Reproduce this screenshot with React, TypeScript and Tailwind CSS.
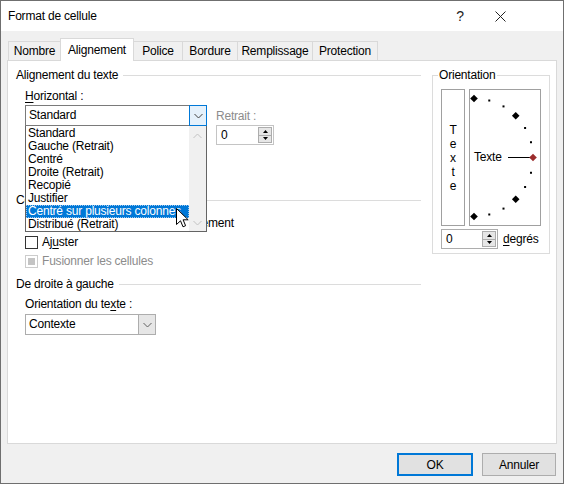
import React from "react";

function Chevron({ color = "#606060", up = false }: { color?: string; up?: boolean }) {
  return (
    <svg width="9" height="6" viewBox="0 0 9 6">
      <path
        d={up ? "M0.5 5 L4.5 1 L8.5 5" : "M0.5 1 L4.5 5 L8.5 1"}
        fill="none"
        stroke={color}
        strokeWidth="1"
      />
    </svg>
  );
}

function GroupHeader({ label }: { label: string }) {
  return (
    <div className="flex items-center h-[14px] leading-[14px]">
      <span>{label}</span>
      <div className="flex-1 h-px bg-[#dcdcdc] ml-[5px]" />
    </div>
  );
}

function Spin({ w, light = false }: { w: string; light?: boolean }) {
  return (
    <div className={`flex ${w} h-[20px] border ${light ? "border-[#c4c4c4]" : "border-[#adadad]"} bg-white`}>
      <div className="flex-1 pl-[4px] leading-[18px]">0</div>
      <div className="flex flex-col w-[15px] py-[1px] pr-[1px]">
        <div className="flex-1 flex items-center justify-center bg-[#e6e6e6] border border-[#adadad]">
          <svg width="5" height="3" viewBox="0 0 5 3">
            <path d="M2.5 0 L5 3 L0 3 Z" fill="#000" />
          </svg>
        </div>
        <div className="flex-1 flex items-center justify-center bg-[#e6e6e6] border border-[#adadad] border-t-0">
          <svg width="5" height="3" viewBox="0 0 5 3">
            <path d="M0 0 L5 0 L2.5 3 Z" fill="#000" />
          </svg>
        </div>
      </div>
    </div>
  );
}

const items = [
  "Standard",
  "Gauche (Retrait)",
  "Centré",
  "Droite (Retrait)",
  "Recopié",
  "Justifier",
  "Centré sur plusieurs colonnes",
  "Distribué (Retrait)",
];

function OrientationDial() {
  const cx = 4;
  const cy = 67.5;
  const r = 59;
  const marks = [];
  for (let i = 0; i <= 12; i++) {
    const a = (i * 15 * Math.PI) / 180;
    const x = cx + r * Math.sin(a);
    const y = cy - r * Math.cos(a);
    marks.push({ x, y, big: i % 3 === 0, red: i === 6 });
  }
  return (
    <div className="relative w-[72px] h-[137px] border border-[#a0a0a0] bg-white">
      <svg className="absolute left-0 top-0" width="70" height="135" viewBox="0 0 70 135">
        <line x1="38" y1="67.5" x2="61" y2="67.5" stroke="#000" strokeWidth="1" />
        {marks.map((m, i) =>
          m.big ? (
            <path
              key={i}
              d={`M${m.x} ${m.y - 3.8} L${m.x + 3.8} ${m.y} L${m.x} ${m.y + 3.8} L${m.x - 3.8} ${m.y} Z`}
              fill={m.red ? "#9b2c2c" : "#000"}
            />
          ) : (
            <rect key={i} x={m.x - 1} y={m.y - 1} width="2" height="2" fill="#000" />
          )
        )}
      </svg>
      <span className="absolute left-[4px] top-[60px] leading-[14px]">Texte</span>
    </div>
  );
}

export default function App() {
  return (
    <div className="relative w-[564px] h-[484px] border border-[#6f6f6f] bg-[#f0f0f0] flex flex-col text-[12px] text-black font-['Liberation_Sans',Arial,sans-serif] tracking-[-0.2px] overflow-hidden">
      {/* Title bar */}
      <div className="h-[30px] bg-white flex items-center shrink-0">
        <div className="pl-[7px] flex-1 leading-[14px]">Format de cellule</div>
        <div className="w-[12px] text-center text-[14px] leading-[16px] text-[#222]">?</div>
        <svg className="ml-[29px] mr-[57px]" width="11" height="11" viewBox="0 0 11 11">
          <path d="M0.5 0.5 L10.5 10.5 M10.5 0.5 L0.5 10.5" stroke="#222" strokeWidth="1" />
        </svg>
      </div>

      {/* Tabs */}
      <div className="relative z-10 flex items-end h-[30px] pl-[7px] shrink-0">
        <div className="w-[52px] h-[20px] flex items-center justify-center bg-[#f0f0f0] border-l border-t border-b border-[#d9d9d9]">Nombre</div>
        <div className="w-[74px] h-[23px] flex items-center justify-center bg-white border-l border-t border-r border-[#d9d9d9]">Alignement</div>
        <div className="w-[48px] h-[20px] flex items-center justify-center bg-[#f0f0f0] border-t border-b border-[#d9d9d9]">Police</div>
        <div className="w-[55px] h-[20px] flex items-center justify-center bg-[#f0f0f0] border-l border-t border-b border-[#d9d9d9]">Bordure</div>
        <div className="w-[75px] h-[20px] flex items-center justify-center bg-[#f0f0f0] border-l border-t border-b border-[#d9d9d9]">Remplissage</div>
        <div className="w-[66px] h-[20px] flex items-center justify-center bg-[#f0f0f0] border border-[#d9d9d9]">Protection</div>
      </div>

      {/* Panel */}
      <div className="-mt-px mx-[6px] h-[384px] border border-[#d9d9d9] bg-white flex items-start pl-[8px] pt-[7px] shrink-0">
        {/* Left column */}
        <div className="w-[405px] flex flex-col">
          <GroupHeader label="Alignement du texte" />
          <div className="flex pl-[9px] mt-[7px]">
            <div className="flex flex-col w-[182px]">
              <div className="h-[14px] leading-[14px]">
                <span className="underline underline-offset-2">H</span>orizontal :
              </div>
              <div className="relative mt-[2px]">
                <div className="flex h-[21px] border border-[#7a7a7a] bg-white">
                  <div className="flex-1 pl-[3px] leading-[19px]">Standard</div>
                  <div className="w-[18px] -my-px -mr-px flex items-center justify-center border border-[#0078d7] bg-[#e5f1fb]">
                    <Chevron color="#404040" />
                  </div>
                </div>
                {/* Open dropdown list */}
                <div className="absolute z-20 left-0 top-[21px] w-[182px] h-[106px] flex border-x border-b border-[#646464] bg-white pt-px">
                  <div className="flex-1 flex flex-col">
                    {items.map((it) =>
                      it === "Centré sur plusieurs colonnes" ? (
                        <div
                          key={it}
                          className="h-[13px] leading-[13px] pl-[2px] bg-[#0078d7] text-white whitespace-nowrap overflow-hidden outline-1 outline-dotted -outline-offset-1 outline-[#9cc8f0]"
                        >
                          {it}
                        </div>
                      ) : (
                        <div key={it} className="h-[13px] leading-[13px] pl-[2px] whitespace-nowrap overflow-hidden">
                          {it}
                        </div>
                      )
                    )}
                  </div>
                  <div className="w-[17px] -mt-px bg-[#f0f0f0] flex flex-col items-center justify-between pt-[7px] pb-[5px]">
                    <Chevron color="#c2c2c2" up />
                    <Chevron color="#c2c2c2" />
                  </div>
                </div>
              </div>
              {/* space occupied by the (covered) vertical alignment controls */}
              <div className="h-[51px]" />
            </div>
            <div className="flex flex-col ml-[9px] mt-[20px]">
              <div className="h-[14px] leading-[14px] text-[#8c8c8c]">Retrait :</div>
              <div className="mt-[2px]">
                <Spin w="w-[58px]" light />
              </div>
            </div>
          </div>

          <div className="mt-[16px]">
            <GroupHeader label="Contrôle du texte" />
          </div>
          <div className="flex items-center h-[14px] pl-[9px] mt-[9px]">
            <div className="w-[13px] h-[13px] border border-[#333] bg-white" />
            <span className="ml-[4px] leading-[14px] whitespace-nowrap">Renvoyer à la ligne automatiquement</span>
          </div>
          <div className="flex items-center h-[14px] pl-[9px] mt-[5px]">
            <div className="w-[13px] h-[13px] border border-[#333] bg-white" />
            <span className="ml-[4px] leading-[14px]">
              Aj<span className="underline underline-offset-2">u</span>ster
            </span>
          </div>
          <div className="flex items-center h-[14px] pl-[9px] mt-[5px]">
            <div className="w-[13px] h-[13px] border border-[#cccccc] bg-white flex items-center justify-center">
              <div className="w-[7px] h-[7px] bg-[#c4c4c4]" />
            </div>
            <span className="ml-[4px] leading-[14px] text-[#8c8c8c]">Fusionner les cellules</span>
          </div>

          <div className="mt-[9px]">
            <GroupHeader label="De droite à gauche" />
          </div>
          <div className="pl-[9px] mt-[6px] h-[14px] leading-[14px]">
            Orientation du te<span className="underline underline-offset-2">x</span>te :
          </div>
          <div className="ml-[9px] mt-[3px] flex w-[131px] h-[21px] border border-[#adadad] bg-white">
            <div className="flex-1 pl-[3px] leading-[19px]">Contexte</div>
            <div className="w-[17px] flex items-center justify-center bg-[#e6e6e6] border-l border-[#adadad]">
              <Chevron />
            </div>
          </div>
        </div>

        {/* Orientation group */}
        <fieldset className="ml-[11px] w-[117px] border border-[#dcdcdc] px-[8px] pb-[4px]">
          <legend className="-ml-[3px] px-[1px] leading-[14px]">Orientation</legend>
          <div className="flex flex-col">
            <div className="flex mt-[7px]">
              <div className="w-[24px] h-[137px] border border-[#a0a0a0] bg-white flex flex-col items-center justify-center">
                {["T", "e", "x", "t", "e"].map((c, i) => (
                  <span key={i} className="leading-[14px] h-[14px]">
                    {c}
                  </span>
                ))}
              </div>
              <div className="ml-[4px]">
                <OrientationDial />
              </div>
            </div>
            <div className="flex items-center mt-[3px]">
              <Spin w="w-[57px]" />
              <span className="ml-[5px] leading-[14px]">
                <span className="underline underline-offset-2">d</span>egrés
              </span>
            </div>
          </div>
        </fieldset>
      </div>

      {/* Buttons */}
      <div className="flex justify-end pr-[7px] mt-[9px] gap-[9px]">
        <div className="w-[76px] h-[23px] border-2 border-[#0078d7] bg-[#e1e1e1] flex items-center justify-center">OK</div>
        <div className="w-[74px] h-[23px] border border-[#adadad] bg-[#e1e1e1] flex items-center justify-center">Annuler</div>
      </div>

      {/* Mouse cursor */}
      <svg className="absolute left-[175px] top-[207px] z-30" width="13" height="20" viewBox="0 0 13 20">
        <path
          d="M0.5 0.5 L0.5 16.5 L4.5 12.8 L7 18.8 L9.6 17.7 L7.1 11.8 L12.2 11.8 Z"
          fill="#fff"
          stroke="#000"
          strokeWidth="1"
          strokeLinejoin="miter"
        />
      </svg>
    </div>
  );
}
